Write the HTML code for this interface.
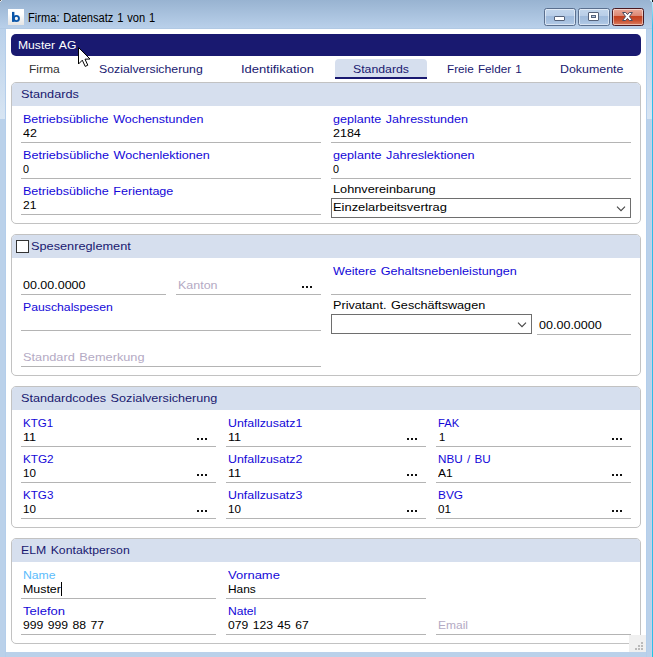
<!DOCTYPE html>
<html><head><meta charset="utf-8"><title>Firma</title>
<style>
html,body{margin:0;padding:0}
body{width:653px;height:657px;overflow:hidden;position:relative;background:#bad1ea;font-family:"Liberation Sans",sans-serif}
.abs,.t,.u,.p,.ph,.d{position:absolute}
.t{line-height:16px;height:16px;white-space:nowrap;transform-origin:0 0}
.u{height:1px;background:#b4b4b4}
.p{box-sizing:border-box;border:1px solid #c2c2c2;border-radius:5px;background:#fff;left:11px;width:630px;height:142px;overflow:hidden}
.ph{left:0;top:0;width:100%;height:23px;background:#d6dfee}
.d{width:2px;height:2px;background:#111;box-shadow:4px 0 0 #111,8px 0 0 #111}
.sel{position:absolute;box-sizing:border-box;border:1px solid #6e6e6e;background:#fff;height:20px}
.wb{position:absolute;top:8px;height:18px;box-sizing:border-box;border:1px solid #5a6f8e;border-radius:2.5px;background:linear-gradient(#c3d6ec 0,#b9cee8 42%,#a0bbdc 46%,#a6c0df 75%,#b4cbe7 100%);box-shadow:inset 0 0 0 1px rgba(255,255,255,.5)}
</style></head><body>
<!-- frame -->
<div class="abs" style="left:0;top:0;width:653px;height:28px;background:linear-gradient(#98b3d1 0,#b9d0ea 100%)"></div>
<div class="abs" style="left:0;top:28px;width:653px;height:1px;background:#b1c9e4"></div>
<div class="abs" style="left:0;top:29px;width:5px;height:90px;background:linear-gradient(#bad1ea 0,#d8e5f3 100%)"></div>
<div class="abs" style="left:647px;top:29px;width:5px;height:90px;background:linear-gradient(#bad1ea 0,#d8e5f3 100%)"></div>
<div class="abs" style="left:5px;top:29px;width:1px;height:628px;background:#b4ceeb"></div>
<div class="abs" style="left:646px;top:29px;width:1px;height:628px;background:#b4ceeb"></div>
<div class="abs" style="left:651px;top:119px;width:1px;height:538px;background:#c5d2ea"></div>
<div class="abs" style="left:652px;top:0;width:1px;height:657px;background:linear-gradient(#c4f0fc 0,#2fbde8 26px,#2fbde8 651px,#1ec6e0 652px)"></div>
<div class="abs" style="left:0;top:0;width:1px;height:1px;background:#585858"></div>
<div class="abs" style="left:1px;top:0;width:1px;height:1px;background:#e6e8ea"></div>
<div class="abs" style="left:0;top:1px;width:1px;height:1px;background:#e6e8ea"></div>
<div class="abs" style="left:652px;top:0;width:1px;height:2px;background:#0a1a20"></div>
<div class="abs" style="left:650px;top:0;width:2px;height:1px;background:#cfeff8"></div>
<div class="abs" style="left:651px;top:1px;width:1px;height:1px;background:#cfeff8"></div>
<!-- icon -->
<div class="abs" style="left:8px;top:9px;width:16px;height:16px;background:linear-gradient(#fff 30%,#e4e4e4)"></div>
<svg class="abs" style="left:8px;top:9px" width="16" height="16" viewBox="0 0 16 16"><path fill="#0a55a8" fill-rule="evenodd" d="M4,2.9 H6.4 V12.9 H4 Z"/><path fill="#0a55a8" fill-rule="evenodd" d="M4.9,9.4 A3.5,3.5 0 1 1 11.9,9.4 A3.5,3.5 0 1 1 4.9,9.4 Z M6.8,9.45 A1.6,1.7 0 1 0 10,9.45 A1.6,1.7 0 1 0 6.8,9.45 Z"/></svg>
<!-- window buttons -->
<div class="wb" style="left:544px;width:32px"><div class="abs" style="left:9px;top:7px;width:11px;height:5px;box-sizing:border-box;border:1px solid #55627a;background:#fff;border-radius:1px"></div></div>
<div class="wb" style="left:578px;width:32px"><div class="abs" style="left:9px;top:3px;width:11px;height:9px;box-sizing:border-box;border:1px solid #55627a;background:#fff;border-radius:1px"></div><div class="abs" style="left:12px;top:6px;width:5px;height:3px;box-sizing:border-box;border:1px solid #55627a;background:#b5c9e3"></div></div>
<div class="wb" style="left:612px;width:32px;border-color:#4a1a22;background:linear-gradient(#eaa999 0,#dc8874 42%,#c4411f 46%,#ca5131 72%,#da7e62 100%)">
<svg class="abs" style="left:8px;top:2px" width="13" height="11" viewBox="0 0 13 11"><path d="M1.6,1.5 L4.7,1.5 L6.5,3.6 L8.3,1.5 L11.4,1.5 L8.4,5.5 L11.4,9.5 L8.3,9.5 L6.5,7.4 L4.7,9.5 L1.6,9.5 L4.6,5.5 Z" fill="#fdfdfd" stroke="#4a4c5e" stroke-width="1" stroke-linejoin="round"/></svg></div>
<!-- client -->
<div class="abs" style="left:6px;top:29px;width:640px;height:623px;background:#fff"></div>
<div class="abs" style="left:11px;top:34px;width:630px;height:22px;border-radius:5px;background:#191970"></div>
<!-- active tab -->
<div class="abs" style="left:335px;top:59px;width:92px;height:18px;border-radius:4px 4px 0 0;background:#d6dfee"></div>
<div class="abs" style="left:335px;top:77px;width:92px;height:2px;background:#191970"></div>
<!-- panels -->
<div class="p" style="top:82px"><div class="ph abs"></div></div>
<div class="p" style="top:234px"><div class="ph abs"></div></div>
<div class="p" style="top:386px"><div class="ph abs"></div></div>
<div class="p" style="top:538px;height:106px"><div class="ph abs"></div></div>
<!-- panel 1 lines -->
<div class="u" style="left:21px;top:142px;width:300px"></div>
<div class="u" style="left:21px;top:178px;width:300px"></div>
<div class="u" style="left:21px;top:214px;width:300px"></div>
<div class="u" style="left:331px;top:142px;width:300px"></div>
<div class="u" style="left:331px;top:178px;width:300px"></div>
<div class="sel" style="left:331px;top:198px;width:300px"></div>
<svg class="abs" style="left:615px;top:204px" width="12" height="9" viewBox="0 0 12 9"><path d="M2,2.6 L6,6.6 L10,2.6" fill="none" stroke="#444" stroke-width="1.1"/></svg>
<!-- panel 2 -->
<div class="abs" style="left:16px;top:240px;width:13px;height:13px;box-sizing:border-box;border:1px solid #333;background:#fff"></div>
<div class="u" style="left:21px;top:294px;width:145px"></div>
<div class="u" style="left:176px;top:294px;width:145px"></div>
<div class="d" style="left:302px;top:286px"></div>
<div class="u" style="left:21px;top:330px;width:300px"></div>
<div class="u" style="left:21px;top:366px;width:300px"></div>
<div class="u" style="left:331px;top:294px;width:300px"></div>
<div class="sel" style="left:331px;top:314px;width:201px"></div>
<svg class="abs" style="left:516px;top:320px" width="12" height="9" viewBox="0 0 12 9"><path d="M2,2.6 L6,6.6 L10,2.6" fill="none" stroke="#444" stroke-width="1.1"/></svg>
<div class="u" style="left:537px;top:334px;width:94px"></div>
<!-- panel 3 -->
<div class="u" style="left:21px;top:446px;width:195px"></div>
<div class="u" style="left:21px;top:482px;width:195px"></div>
<div class="u" style="left:21px;top:518px;width:195px"></div>
<div class="u" style="left:226px;top:446px;width:200px"></div>
<div class="u" style="left:226px;top:482px;width:200px"></div>
<div class="u" style="left:226px;top:518px;width:200px"></div>
<div class="u" style="left:436px;top:446px;width:195px"></div>
<div class="u" style="left:436px;top:482px;width:195px"></div>
<div class="u" style="left:436px;top:518px;width:195px"></div>
<div class="d" style="left:197px;top:438px"></div><div class="d" style="left:197px;top:474px"></div><div class="d" style="left:197px;top:510px"></div>
<div class="d" style="left:407px;top:438px"></div><div class="d" style="left:407px;top:474px"></div><div class="d" style="left:407px;top:510px"></div>
<div class="d" style="left:612px;top:438px"></div><div class="d" style="left:612px;top:474px"></div><div class="d" style="left:612px;top:510px"></div>
<!-- panel 4 -->
<div class="u" style="left:21px;top:598px;width:195px"></div>
<div class="u" style="left:21px;top:634px;width:195px"></div>
<div class="u" style="left:226px;top:598px;width:200px"></div>
<div class="u" style="left:226px;top:634px;width:200px"></div>
<div class="u" style="left:436px;top:634px;width:195px"></div>
<div class="abs" style="left:61px;top:582px;width:1px;height:14px;background:#000"></div>
<!-- texts -->
<span class="t" style="left:28.39px;top:10px;color:#000;font-size:12px;word-spacing:0.8px;transform:scaleX(0.9268)">Firma: Datensatz 1 von 1</span>
<span class="t" style="left:18.08px;top:37px;color:#fff;font-size:11.5px;word-spacing:1px;transform:scaleX(1.0555)">Muster AG</span>
<span class="t" style="left:29.38px;top:61px;color:#333;font-size:11.5px;word-spacing:1px;transform:scaleX(1.0494)">Firma</span>
<span class="t" style="left:99.06px;top:61px;color:#191970;font-size:11.5px;word-spacing:1px;transform:scaleX(1.0675)">Sozialversicherung</span>
<span class="t" style="left:241.07px;top:61px;color:#191970;font-size:11.5px;word-spacing:1px;transform:scaleX(1.1290)">Identifikation</span>
<span class="t" style="left:352.56px;top:61px;color:#191970;font-size:11.5px;word-spacing:1px;transform:scaleX(1.0681)">Standards</span>
<span class="t" style="left:446.69px;top:61px;color:#191970;font-size:11.5px;word-spacing:1px;transform:scaleX(1.0174)">Freie Felder 1</span>
<span class="t" style="left:559.88px;top:61px;color:#191970;font-size:11.5px;word-spacing:1px;transform:scaleX(1.0780)">Dokumente</span>
<span class="t" style="left:21.24px;top:86px;color:#191970;font-size:11.5px;word-spacing:1px;transform:scaleX(1.1026)">Standards</span>
<span class="t" style="left:23.27px;top:111px;color:#1408d8;font-size:11.5px;word-spacing:1px;transform:scaleX(1.0883)">Betriebsübliche Wochenstunden</span>
<span class="t" style="left:23.02px;top:125px;color:#000;font-size:11.5px;word-spacing:1px;transform:scaleX(1.0823)">42</span>
<span class="t" style="left:23.27px;top:147px;color:#1408d8;font-size:11.5px;word-spacing:1px;transform:scaleX(1.0937)">Betriebsübliche Wochenlektionen</span>
<span class="t" style="left:23.44px;top:161px;color:#000;font-size:11.5px;word-spacing:1px;transform:scaleX(0.9380)">0</span>
<span class="t" style="left:23.27px;top:183px;color:#1408d8;font-size:11.5px;word-spacing:1px;transform:scaleX(1.0907)">Betriebsübliche Ferientage</span>
<span class="t" style="left:23.00px;top:197px;color:#000;font-size:11.5px;word-spacing:1px;transform:scaleX(1.0517)">21</span>
<span class="t" style="left:333.04px;top:111px;color:#1408d8;font-size:11.5px;word-spacing:1px;transform:scaleX(1.0911)">geplante Jahresstunden</span>
<span class="t" style="left:332.98px;top:125px;color:#000;font-size:11.5px;word-spacing:1px;transform:scaleX(1.0879)">2184</span>
<span class="t" style="left:333.04px;top:147px;color:#1408d8;font-size:11.5px;word-spacing:1px;transform:scaleX(1.0989)">geplante Jahreslektionen</span>
<span class="t" style="left:333.44px;top:161px;color:#000;font-size:11.5px;word-spacing:1px;transform:scaleX(0.9380)">0</span>
<span class="t" style="left:333.27px;top:181px;color:#000;font-size:11.5px;word-spacing:1px;transform:scaleX(1.1071)">Lohnvereinbarung</span>
<span class="t" style="left:333.06px;top:199px;color:#000;font-size:11.5px;word-spacing:1px;transform:scaleX(1.1212)">Einzelarbeitsvertrag</span>
<span class="t" style="left:31.04px;top:238px;color:#191970;font-size:11.5px;word-spacing:1px;transform:scaleX(1.1072)">Spesenreglement</span>
<span class="t" style="left:23.42px;top:277px;color:#000;font-size:11.5px;word-spacing:1px;transform:scaleX(1.0851)">00.00.0000</span>
<span class="t" style="left:178.27px;top:277px;color:#b4aac4;font-size:11.5px;word-spacing:1px;transform:scaleX(1.0841)">Kanton</span>
<span class="t" style="left:23.28px;top:299px;color:#1408d8;font-size:11.5px;word-spacing:1px;transform:scaleX(1.0645)">Pauschalspesen</span>
<span class="t" style="left:22.94px;top:349px;color:#b4aac4;font-size:11.5px;word-spacing:1px;transform:scaleX(1.1080)">Standard Bemerkung</span>
<span class="t" style="left:333.02px;top:263px;color:#1408d8;font-size:11.5px;word-spacing:1px;transform:scaleX(1.0959)">Weitere Gehaltsnebenleistungen</span>
<span class="t" style="left:333.27px;top:297px;color:#000;font-size:11.5px;word-spacing:1px;transform:scaleX(1.0995)">Privatant. Geschäftswagen</span>
<span class="t" style="left:539.41px;top:317px;color:#000;font-size:11.5px;word-spacing:1px;transform:scaleX(1.0903)">00.00.0000</span>
<span class="t" style="left:21.25px;top:390px;color:#191970;font-size:11.5px;word-spacing:1px;transform:scaleX(1.0987)">Standardcodes Sozialversicherung</span>
<span class="t" style="left:23.30px;top:415px;color:#1408d8;font-size:11.5px;word-spacing:1px;transform:scaleX(1.0007)">KTG1</span>
<span class="t" style="left:23.39px;top:429px;color:#000;font-size:11.5px;word-spacing:1px;transform:scaleX(1.1004)">11</span>
<span class="t" style="left:23.29px;top:451px;color:#1408d8;font-size:11.5px;word-spacing:1px;transform:scaleX(1.0186)">KTG2</span>
<span class="t" style="left:23.43px;top:465px;color:#000;font-size:11.5px;word-spacing:1px;transform:scaleX(1.0100)">10</span>
<span class="t" style="left:23.30px;top:487px;color:#1408d8;font-size:11.5px;word-spacing:1px;transform:scaleX(1.0100)">KTG3</span>
<span class="t" style="left:23.43px;top:501px;color:#000;font-size:11.5px;word-spacing:1px;transform:scaleX(1.0100)">10</span>
<span class="t" style="left:228.14px;top:415px;color:#1408d8;font-size:11.5px;word-spacing:1px;transform:scaleX(1.0770)">Unfallzusatz1</span>
<span class="t" style="left:228.29px;top:429px;color:#000;font-size:11.5px;word-spacing:1px;transform:scaleX(1.1004)">11</span>
<span class="t" style="left:228.14px;top:451px;color:#1408d8;font-size:11.5px;word-spacing:1px;transform:scaleX(1.0786)">Unfallzusatz2</span>
<span class="t" style="left:228.29px;top:465px;color:#000;font-size:11.5px;word-spacing:1px;transform:scaleX(1.1004)">11</span>
<span class="t" style="left:228.14px;top:487px;color:#1408d8;font-size:11.5px;word-spacing:1px;transform:scaleX(1.0762)">Unfallzusatz3</span>
<span class="t" style="left:228.33px;top:501px;color:#000;font-size:11.5px;word-spacing:1px;transform:scaleX(1.0100)">10</span>
<span class="t" style="left:438.31px;top:415px;color:#1408d8;font-size:11.5px;word-spacing:1px;transform:scaleX(0.9739)">FAK</span>
<span class="t" style="left:438.55px;top:429px;color:#000;font-size:11.5px;word-spacing:1px;transform:scaleX(0.9728)">1</span>
<span class="t" style="left:438.29px;top:451px;color:#1408d8;font-size:11.5px;word-spacing:1px;transform:scaleX(1.0148)">NBU / BU</span>
<span class="t" style="left:437.88px;top:465px;color:#000;font-size:11.5px;word-spacing:1px;transform:scaleX(1.0474)">A1</span>
<span class="t" style="left:438.29px;top:487px;color:#1408d8;font-size:11.5px;word-spacing:1px;transform:scaleX(1.0285)">BVG</span>
<span class="t" style="left:438.23px;top:501px;color:#000;font-size:11.5px;word-spacing:1px;transform:scaleX(1.0175)">01</span>
<span class="t" style="left:21.48px;top:542px;color:#191970;font-size:11.5px;word-spacing:1px;transform:scaleX(1.0657)">ELM Kontaktperson</span>
<span class="t" style="left:23.28px;top:567px;color:#5cbcfc;font-size:11.5px;word-spacing:1px;transform:scaleX(1.0603)">Name</span>
<span class="t" style="left:23.28px;top:581px;color:#000;font-size:11.5px;word-spacing:1px;transform:scaleX(1.0784)">Muster</span>
<span class="t" style="left:22.53px;top:603px;color:#1408d8;font-size:11.5px;word-spacing:1px;transform:scaleX(1.1319)">Telefon</span>
<span class="t" style="left:23.16px;top:617px;color:#000;font-size:11.5px;word-spacing:1px;transform:scaleX(1.0602)">999 999 88 77</span>
<span class="t" style="left:228.14px;top:567px;color:#1408d8;font-size:11.5px;word-spacing:1px;transform:scaleX(1.1268)">Vorname</span>
<span class="t" style="left:228.19px;top:581px;color:#000;font-size:11.5px;word-spacing:1px;transform:scaleX(1.0329)">Hans</span>
<span class="t" style="left:228.18px;top:603px;color:#1408d8;font-size:11.5px;word-spacing:1px;transform:scaleX(1.0513)">Natel</span>
<span class="t" style="left:228.42px;top:617px;color:#000;font-size:11.5px;word-spacing:1px;transform:scaleX(1.0554)">079 123 45 67</span>
<span class="t" style="left:438.29px;top:617px;color:#b4aac4;font-size:11.5px;word-spacing:1px;transform:scaleX(1.0441)">Email</span>
<!-- resize grip -->
<div class="abs" style="left:629px;top:635px;width:17px;height:17px;background:#f0f0f0"></div>
<div class="abs" style="left:641px;top:642px;width:2px;height:2px;background:#bababa;box-shadow:0 3px 0 #bababa,0 6px 0 #bababa,-3px 3px 0 #bababa,-3px 6px 0 #bababa,-6px 6px 0 #bababa"></div>
<!-- cursor -->
<svg class="abs" style="left:77px;top:46px" width="16" height="23" viewBox="-1 -1 16 23"><path d="M0.5,0.5 L0.5,17 L4.3,13.2 L7.2,19.4 L9.8,18.2 L7,12.2 L12,12.0 Z" fill="#fff" stroke="#000" stroke-width="1" stroke-linejoin="miter"/></svg>
</body></html>
